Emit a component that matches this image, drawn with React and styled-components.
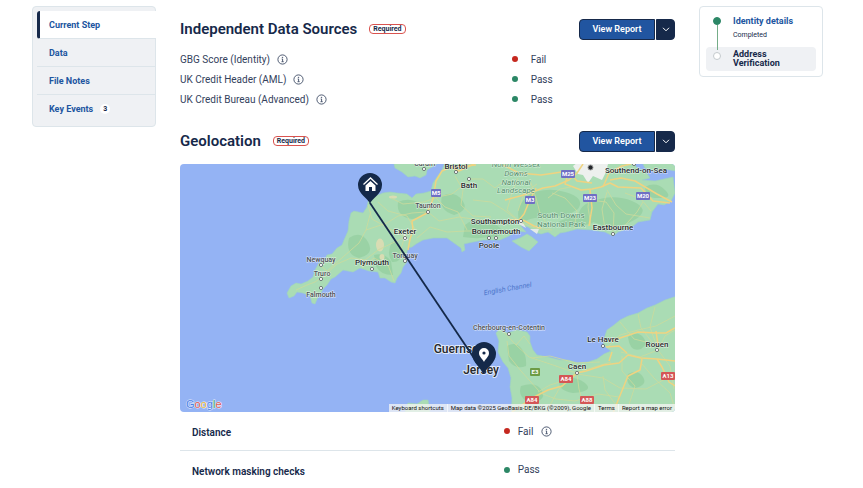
import React from 'react';
import styled, { createGlobalStyle } from 'styled-components';

const color = {
	navy: '#16294a',
	blue: '#2155a0',
	text: '#33415c',
	panel: '#eff1f4',
	line: '#dde5ea',
	pass: '#2c8766',
	fail: '#c5281f',
};

const GlobalStyle = createGlobalStyle`
	* {
		box-sizing: border-box;
	}
	body {
		margin: 0;
		background: #fff;
		color: ${color.navy};
		font-family: Roboto, "Liberation Sans", sans-serif;
		font-size: 10px;
	}
	h1, h2, p, ul, ol, dl, dd {
		margin: 0;
		padding: 0;
		list-style: none;
	}
	button {
		font-family: inherit;
		cursor: pointer;
	}
	a {
		text-decoration: none;
	}
`;

const Page = styled.div`
	display: grid;
	grid-template-columns: 124px minmax(0, 1fr) 124px;
	align-items: start;
	gap: 24px;
	padding: 6px 40px 0 32px;
`;

const SideNav = styled.nav`
	padding: 4px 0 3px 4px;
	background: ${color.panel};
	border: 1px solid ${color.line};
	border-radius: 4px;
	a {
		display: flex;
		align-items: center;
		gap: 7px;
		height: 28px;
		padding-left: 12px;
		border-bottom: 1px solid ${color.line};
		color: ${color.blue};
		font-size: 9px;
		font-weight: 700;
	}
	li:last-child a {
		border-bottom: 0;
	}
	a[aria-current] {
		margin-right: -1px;
		padding-left: 9px;
		background: #fff;
		border-left: 3px solid ${color.navy};
		border-radius: 3px 0 0 3px;
	}
`;

const Count = styled.span`
	padding: 0 3px;
	background: #fff;
	border-radius: 5px;
	color: ${color.navy};
	font-size: 7px;
	line-height: 10px;
`;

const Main = styled.main`
	padding-top: 12px;
`;

const SectionHeader = styled.div`
	display: flex;
	align-items: center;
	height: 22px;
	h2 {
		font-size: 15px;
		font-weight: 600;
	}
`;

const Required = styled.span`
	margin-left: 12px;
	padding: 0 3px;
	border: 1px solid #d9534f;
	border-radius: 4px;
	font-size: 7px;
	font-weight: 700;
	line-height: 8px;
`;

const SplitButton = styled.div`
	display: flex;
	gap: 1px;
	margin-left: auto;
	button {
		height: 21px;
		padding: 0;
		border: 1px solid ${color.navy};
		color: #fff;
		font-size: 9px;
		font-weight: 600;
	}
	button:first-child {
		width: 76px;
		background: ${color.blue};
		border-radius: 4px 0 0 4px;
	}
	button:last-child {
		display: flex;
		align-items: center;
		justify-content: center;
		width: 19px;
		background: ${color.navy};
		border-radius: 0 4px 4px 0;
	}
`;

const Checks = styled.dl`
	padding: 9px 0 21px;
	color: ${color.text};
`;

const Check = styled.div`
	display: grid;
	grid-template-columns: 67% 1fr;
	height: 20px;
	dt, dd {
		display: flex;
		align-items: center;
		gap: 7px;
	}
	dd {
		gap: 13px;
	}
`;

const Dot = styled.span`
	width: 6px;
	height: 6px;
	border-radius: 50%;
	background: ${props => (props.$fail ? color.fail : color.pass)};
`;

const InfoButton = styled.button`
	display: flex;
	padding: 0;
	border: 0;
	background: none;
	color: ${color.text};
`;

const MapFrame = styled.div`
	position: relative;
	margin-top: 12px;
	border-radius: 4px;
	overflow: hidden;
	> svg {
		display: block;
		width: 100%;
		height: auto;
	}
`;

const Attribution = styled.div`
	position: absolute;
	right: 0;
	bottom: 0;
	display: flex;
	background: rgba(245, 245, 245, 0.75);
	color: #111;
	font-size: 6px;
	line-height: 8px;
	white-space: nowrap;
	> * {
		padding: 0 3px;
		border: 0;
		background: none;
		color: inherit;
		font: inherit;
	}
	> * + * {
		border-left: 1px solid rgba(255, 255, 255, 0.6);
	}
`;

const Result = styled.div`
	display: grid;
	grid-template-columns: 65% 1fr;
	align-items: center;
	height: 39px;
	border-bottom: 1px solid ${color.line};
	&:last-child {
		height: 37px;
		border-bottom: 0;
	}
	dt {
		padding: 3px 0 0 12px;
		font-weight: 600;
	}
	dd {
		display: flex;
		align-items: center;
		gap: 8px;
		padding-left: 2px;
		color: ${color.text};
	}
`;

const Steps = styled.ol`
	padding: 5px 6px;
	border: 1px solid ${color.line};
	border-radius: 4px;
`;

const Step = styled.li`
	display: flex;
	gap: 12px;
	padding: 3px 0 3px 7px;
	border-radius: 4px;
	background: ${props => (props.$current ? color.panel : 'transparent')};
	a, p {
		display: block;
		color: ${props => (props.$current ? color.navy : color.blue)};
		font-size: 9px;
		font-weight: 700;
		line-height: 9px;
	}
	a {
		line-height: 12px;
	}
	small {
		display: block;
		padding: 4px 0;
		font-size: 7px;
		line-height: 9px;
	}
`;

const Track = styled.span`
	display: flex;
	flex-direction: column;
	align-items: center;
	width: 8px;
	margin: 2px 0 -6px;
	&::before {
		content: '';
		flex: none;
		width: 6px;
		height: 6px;
		border: 1px solid ${props => (props.$current ? '#c4cacd' : color.pass)};
		border-radius: 50%;
		background: ${props => (props.$current ? '#fff' : color.pass)};
	}
	&::after {
		content: '';
		flex: 1;
		width: 1px;
		background: ${props => (props.$current ? 'transparent' : '#75ad88')};
	}
`;

const Info = ({ label }) => (
	<InfoButton type="button" aria-label={`About ${label}`}>
		<svg width="11" height="11" viewBox="0 0 22 22" fill="none" stroke="currentColor" strokeWidth="1.7">
			<circle cx="11" cy="11" r="9.2" />
			<path d="M9.4 10h1.8v5.2M9 15.4h4.4" />
			<circle cx="11" cy="6.9" r="0.6" fill="currentColor" />
		</svg>
	</InfoButton>
);

const Section = ({ title }) => (
	<SectionHeader>
		<h2>{title}</h2>
		<Required>Required</Required>
		<SplitButton>
			<button type="button">View Report</button>
			<button type="button" aria-label="More report options">
				<svg width="8" height="5" viewBox="0 0 8 5" fill="none" stroke="#fff">
					<path d="M1 0.8 4 3.8 7 0.8" />
				</svg>
			</button>
		</SplitButton>
	</SectionHeader>
);

const checks = [
	{ name: 'GBG Score (Identity)', fail: true },
	{ name: 'UK Credit Header (AML)' },
	{ name: 'UK Credit Bureau (Advanced)' },
];

const land = [
	// Wales
	'M393 160 395 168 402 172 408 177 415 176 420 178 426 175 427 170 437 164 V160Z',
	// southern England
	'M287 293 291 286 296 283 301 284 308 281 313 277 315 270 319 263 325 259 327 255 332 254 337 248 342 245 344 240 348 231 349 221 351 213 354 211 363 213 367 207 368 202 372 196 378 195 383 193 390 192 397 193 407 194 412 198 416 194 424 193 431 191 433 183 437 177 442 170 446 160 H634 L636 167 646 172 650 178 642 180 655 181 664 179 673 177 675 193 671 201 664 205 658 204 652 212 650 220 638 222 632 227 618 232 613 236 605 232 592 230 577 229 566 232 560 233 555 237 548 232 541 234 535 232 528 227 520 225 526 232 517 231 509 236 500 240 483 240 473 242 464 244 465 250 462 252 461 248 454 243 447 238 433 238 423 240 416 244 412 247 408 248 406 256 407 262 403 267 401 273 397 278 395 283 391 282 385 278 380 278 378 272 369 271 360 268 353 272 343 270 335 277 331 279 327 285 323 289 320 295 317 299 315 304 312 303 310 296 303 293 297 292 294 296 289 298Z',
	// Essex shore
	'M641 160 645 168 653 171 663 169 676 171 V160Z',
	// Isle of Wight
	'M512 241 520 238 527 234 532 237 538 242 533 247 529 251 521 247Z',
	// Normandy
	'M496 333 500 329 507 333 517 330 527 332 530 336 530 342 533 350 537 355 548 357 560 360 568 360 578 363 588 362 597 359 604 354 611 351 604 346 603 341 607 330 614 325 620 320 628 316 638 313 647 308 655 305 665 300 680 295 V416 H511 L512 398 510 387 511 378 508 368 503 362 498 352 499 341Z',
	// Brittany
	'M405 412 408 403 417 404 423 400 428 400 430 412Z',
];

const woods = [
	'M398 202q14-6 25 4t-11 13q-16-2-14-17Z',
	'M349 238q12-8 19 4t-9 16q-14-3-10-20Z',
	'M392 242q8-3 9 9t-9 11q-6-9 0-20Z',
	'M374 255q10-3 17 6l2 14q-13 0-17-9Z',
	'M442 196q12-6 20 4t-8 15q-16-5-12-19Z',
	'M465 225q14-11 27-3t10 13q-21 5-39 2Z',
	'M527 196q17-10 38-4t13 17q-10 8-30 8t-27 7q-8-13 6-28Z',
	'M590 202q23-9 42-1t4 18q-18 11-34 6t-24-10q3-10 12-13Z',
	'M645 187q11-6 20 3t-6 8q-13 1-14-11Z',
	'M507 346q8-5 14 2t5 18q-10 4-17-5Z',
	'M628 337q9-7 15 0t-2 12q-11 4-13-12Z',
	'M521 386q16-5 21 5t-13 12q-12-7-8-17Z',
	'M560 379q15-4 25 4t-12 10q-17-3-13-14Z',
	'M628 374q10-5 15 3t-8 11q-10-3-7-14Z',
	'M572 216q13-2 20 3t-15 7-18 2-1-6Z',
];

const minorRoads = [
	'M296 290 307 285 315 282 325 275 337 264 351 258 365 260 378 250 405 237M318 264 327 271 343 257 359 243 366 230 371 211',
	'M378 202 388 211 407 216 415 229 405 237M368 205 372 219 388 228 405 237M366 230 387 223 398 216 412 213 426 212',
	'M394 281 388 265 374 258 362 268M404 239 400 252 406 260M391 198 403 204 424 202 438 197 452 194 470 180',
	'M428 212 439 221 459 217 480 220 501 223M434 196 445 207 458 212 467 230M417 238 430 227 447 232 466 231 482 231',
	'M455 176 463 190 461 205 473 216 491 217M469 179 483 179 495 188 505 180M473 200 491 202 504 210 520 222',
	'M518 178 512 193 507 210 520 222 535 228 552 230M530 180 536 198 540 213 550 230M552 193 565 198 577 211 574 229',
	'M590 190 588 207 591 226M590 200 606 202 614 213 613 233M607 190 616 205 626 214 650 218M643 202 637 212 620 231',
	'M548 198 560 189 571 187M537 184 524 193 518 211M625 193 641 199 651 211M607 192 602 209 605 229',
	'M504 332 515 344 529 357 553 365 576 373M507 341 509 356 521 371 539 391M516 345 524 336 530 344',
	'M538 392 550 385 563 381 576 373 594 367 611 362M577 374 579 389 583 404 592 415M577 374 603 378 620 388 646 389 675 374',
	'M531 358 550 356 576 363 600 362M539 394 529 405 519 412M540 393 556 399 575 401 598 394 619 397',
	'M608 347 620 335 638 330 656 326 675 316M620 322 634 339 650 343M638 314 641 328 656 347M655 307 650 327 658 350',
	'M658 350 670 366 674 389M658 350 640 357 621 352M658 350 665 336 675 330M642 364 654 378 670 393 675 409',
	'M603 376 605 390 619 409M577 374 559 389 550 405M622 356 622 371 635 386 627 411',
];

const majorRoads = [
	'M408 250 410 239 413 230 412 221 427 213 433 199 436 181 442 171 451 167 476 165',
	'M451 167 459 171 474 164M503 165 519 173 541 175 555 173 568 171 577 181 592 183',
	'M505 200 520 196 530 193 543 188 555 186 569 180 577 173 583 164M508 220 519 220 524 214 529 202 536 188',
	'M523 220 534 226 541 228M568 174 565 184 581 190 592 189 601 187 610 183 618 187 641 188 653 201 670 203',
	'M590 189 592 208 589 226M603 187 609 173 622 166 631 164M610 180 621 178 635 181 657 194 672 202',
	'M512 412 532 398 548 390 562 386 577 373 586 371 604 365 619 363 628 355 641 358 657 359 675 361',
	'M606 347 619 346 627 353M611 341 626 336 638 332 656 333 666 333 675 328M656 331 658 345M642 359 640 370 628 376 619 398 613 413',
	'M657 359 662 367 669 382 675 386M609 361 612 352',
];

const places = [
	{ name: 'Cardiff', x: 425, y: 166, dot: [424, 169], light: true },
	{ name: 'Bristol', x: 456, y: 169, dot: [456, 172] },
	{ name: 'Bath', x: 469, y: 188, dot: [469, 179] },
	{ name: 'Taunton', x: 428, y: 208, dot: [428, 212], light: true },
	{ name: 'Exeter', x: 405, y: 234, dot: [405, 238] },
	{ name: 'Torquay', x: 405, y: 258, dot: [405, 261], light: true },
	{ name: 'Plymouth', x: 372, y: 265, dot: [372, 269] },
	{ name: 'Newquay', x: 321, y: 262, dot: [321, 265], light: true },
	{ name: 'Truro', x: 322, y: 276, dot: [321, 279], light: true },
	{ name: 'Falmouth', x: 321, y: 297, dot: [321, 288], light: true },
	{ name: 'Southampton', x: 495, y: 224, dot: [521, 221] },
	{ name: 'Bournemouth', x: 496, y: 234, dot: [496, 238] },
	{ name: 'Poole', x: 489, y: 248, dot: [489, 238] },
	{ name: 'Southend-on-Sea', x: 636, y: 173, dot: [634, 164] },
	{ name: 'Eastbourne', x: 613, y: 230, dot: [613, 234] },
	{ name: 'Cherbourg-en-Cotentin', x: 509, y: 330, dot: [509, 334], light: true },
	{ name: 'Le Havre', x: 603, y: 342, dot: [603, 346] },
	{ name: 'Rouen', x: 657, y: 347, dot: [657, 350] },
	{ name: 'Caen', x: 577, y: 369, dot: [577, 373] },
];

const shields = [
	{ name: 'M5', x: 436, y: 193 },
	{ name: 'M25', x: 568, y: 174 },
	{ name: 'M3', x: 530, y: 200 },
	{ name: 'M23', x: 590, y: 198 },
	{ name: 'M20', x: 643, y: 196 },
	{ name: 'E3', x: 535, y: 372, fill: '#6d9c45' },
	{ name: 'A84', x: 566, y: 379, fill: '#d45656' },
	{ name: 'A84', x: 532, y: 400, fill: '#d45656' },
	{ name: 'A88', x: 587, y: 400, fill: '#d45656' },
	{ name: 'A13', x: 668, y: 376, fill: '#d45656' },
];

const parks = [
	{ name: 'North Wessex', x: 516, y: 167 },
	{ name: 'Downs', x: 516, y: 176 },
	{ name: 'National', x: 516, y: 185 },
	{ name: 'Landscape', x: 516, y: 193 },
	{ name: 'South Downs', x: 561, y: 218 },
	{ name: 'National Park', x: 561, y: 227 },
];

const PlaceText = styled.text`
	fill: ${props => (props.$light ? '#4a4f54' : '#26292c')};
	font-size: ${props => (props.$large ? '12px' : props.$light ? '7px' : '8px')};
	font-weight: 500;
	text-anchor: middle;
	paint-order: stroke;
	stroke: rgba(255, 255, 255, 0.7);
	stroke-width: ${props => (props.$large ? '2px' : '1px')};
`;

const ParkText = styled.text`
	fill: #548b6a;
	font-size: 8px;
	font-style: ${props => (props.$upright ? 'normal' : 'italic')};
	text-anchor: middle;
	paint-order: stroke;
	stroke: rgba(230, 247, 235, 0.7);
	stroke-width: 1px;
`;

const SeaText = styled.text`
	fill: #4a74c9;
	font-size: 7px;
	font-style: italic;
	text-anchor: middle;
`;

const ShieldText = styled.text`
	fill: #fff;
	font-size: 6px;
	font-weight: 700;
	text-anchor: middle;
`;

const LogoText = styled.text`
	font-family: "Liberation Sans", sans-serif;
	font-size: 11px;
	paint-order: stroke;
	stroke: #e8effc;
	stroke-width: 1px;
`;

const RouteMap = () => (
	<svg viewBox="180 164 495 248" role="img" aria-label="Map from north Devon to Jersey">
		<rect x="180" y="164" width="495" height="248" fill="#94b3f4" />
		<g fill="#aadcb4" stroke="#a0d5bd" strokeWidth="0.6" strokeLinejoin="round">
			{land.map(d => <path key={d} d={d} />)}
		</g>
		<g fill="#8fcc9b" opacity="0.6">
			{woods.map(d => <path key={d} d={d} />)}
		</g>
		<g fill="#d9dcb3">
			<ellipse cx="380" cy="245" rx="4" ry="6.5" />
			<ellipse cx="382" cy="257" rx="2.5" ry="3" />
			<ellipse cx="393" cy="197" rx="4" ry="1.5" />
		</g>
		<path d="M573 166 581 160H609L606 172 602 180 593 176 588 183 583 175 578 174Z" fill="#edf0ee" />
		<path d="M515 222 521 219 526 228ZM530 229 539 229 537 234ZM404 232 408 240 403 241Z" fill="#e4eae8" />
		<g fill="none" strokeLinejoin="round">
			<g stroke="#cdda9c" strokeWidth="0.8">
				{minorRoads.map(d => <path key={d} d={d} />)}
			</g>
			<g stroke="#efd381" strokeWidth="1.5">
				{majorRoads.map(d => <path key={d} d={d} />)}
			</g>
		</g>
		{parks.map(park => (
			<ParkText key={park.name} x={park.x} y={park.y} $upright={park.x > 540}>{park.name}</ParkText>
		))}
		<SeaText x="508" y="291" transform="rotate(-10 508 291)">English Channel</SeaText>
		{shields.map(({ name, x, y, fill = '#6f6fc4' }) => (
			<g key={`${name}-${x}`}>
				<rect x={x - name.length * 2 - 1} y={y - 4} width={name.length * 4 + 2} height="8" rx="1" fill={fill} />
				<ShieldText x={x} y={y + 2}>{name}</ShieldText>
			</g>
		))}
		<circle cx="590.5" cy="167.5" r="2.5" fill="#22262a" stroke="#999" />
		{places.map(({ name, x, y, dot, light }) => (
			<g key={name}>
				<circle cx={dot[0]} cy={dot[1]} r="1.6" fill="#fff" stroke="#555c60" strokeWidth="0.8" />
				<PlaceText x={x} y={y} $light={light}>{name}</PlaceText>
			</g>
		))}
		<PlaceText x="459" y="353" $large>Guernsey</PlaceText>
		<PlaceText x="481" y="374" $large>Jersey</PlaceText>
		<path d="M370 203 484 373" stroke="#14294a" strokeWidth="1.8" />
		<g fill="#14294a">
			<path d="M370 204C368 198 358 194 358 185A12 12 0 0 1 382 185C382 194 372 198 370 204Z" />
			<path d="M484 374C482 368 472 363 472 354A12 12 0 0 1 496 354C496 363 486 368 484 374Z" />
		</g>
		<path d="M363.5 184.5 370.5 178 377.5 184.5" fill="none" stroke="#fff" strokeWidth="1.3" />
		<path d="M365.5 185.5 370.5 181 375.5 185.5V191H372V187H369V191H365.5Z" fill="#fff" />
		<path d="M484 362C483 359 479 357 479 353A5 5 0 0 1 489 353C489 357 485 359 484 362Z" fill="#fff" />
		<circle cx="484" cy="353" r="1.6" fill="#14294a" />
		<LogoText x="186" y="408">
			<tspan fill="#4b80e6">G</tspan>
			<tspan fill="#e05a50">o</tspan>
			<tspan fill="#e8b73a">o</tspan>
			<tspan fill="#4b80e6">g</tspan>
			<tspan fill="#4ea768">l</tspan>
			<tspan fill="#e05a50">e</tspan>
		</LogoText>
	</svg>
);

const App = () => {
	return (
		<>
			<GlobalStyle />
			<Page>
				<SideNav>
					<ul>
						<li><a href="#current" aria-current="page">Current Step</a></li>
						<li><a href="#data">Data</a></li>
						<li><a href="#notes">File Notes</a></li>
						<li><a href="#events">Key Events <Count>3</Count></a></li>
					</ul>
				</SideNav>

				<Main>
					<Section title="Independent Data Sources" />
					<Checks>
						{checks.map(({ name, fail }) => (
							<Check key={name}>
								<dt>{name} <Info label={name} /></dt>
								<dd><Dot $fail={fail} />{fail ? 'Fail' : 'Pass'}</dd>
							</Check>
						))}
					</Checks>

					<Section title="Geolocation" />
					<MapFrame>
						<RouteMap />
						<Attribution>
							<button type="button">Keyboard shortcuts</button>
							<span>Map data ©2025 GeoBasis-DE/BKG (©2009), Google</span>
							<a href="#terms">Terms</a>
							<a href="#report">Report a map error</a>
						</Attribution>
					</MapFrame>
					<dl>
						<Result>
							<dt>Distance</dt>
							<dd><Dot $fail />Fail <Info label="Distance" /></dd>
						</Result>
						<Result>
							<dt>Network masking checks</dt>
							<dd><Dot />Pass</dd>
						</Result>
					</dl>
				</Main>

				<Steps>
					<Step>
						<Track />
						<div>
							<a href="#identity">Identity details</a>
							<small>Completed</small>
						</div>
					</Step>
					<Step $current aria-current="step">
						<Track $current />
						<p>Address<br />Verification</p>
					</Step>
				</Steps>
			</Page>
		</>
	);
}

export default App;
